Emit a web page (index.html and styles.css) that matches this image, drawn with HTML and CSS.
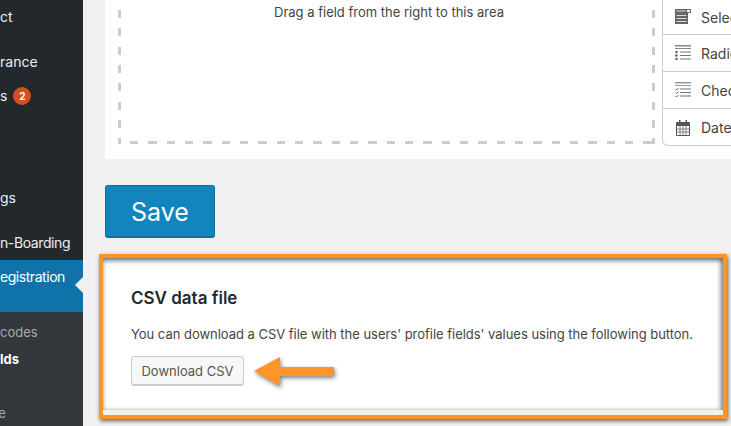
FILE: index.html
```html
<!DOCTYPE html>
<html lang="en">
<head>
    <meta charset="UTF-8">
    <meta name="viewport" content="width=device-width, initial-scale=1.0">
    <title>Profile Fields</title>
    <link rel="stylesheet" href="styles.css">
</head>
<body>
    <nav class="sidebar">
        <ul class="menu">
            <li class="menu-item">ct</li>
            <li class="menu-sep"></li>
            <li class="menu-item">rance</li>
            <li class="menu-item">s <span class="badge">2</span></li>
            <li class="menu-item"></li>
            <li class="menu-item"></li>
            <li class="menu-item">gs</li>
            <li class="menu-sep"></li>
            <li class="menu-item tight">n-Boarding</li>
            <li class="menu-item active">egistration</li>
        </ul>
        <ul class="submenu">
            <li>codes</li>
            <li class="current">lds</li>
            <li></li>
            <li class="clipped">le</li>
        </ul>
    </nav>

    <main class="content">
        <div class="panel">
            <div class="drop-area">Drag a field from the right to this area</div>
            <ul class="field-list">
                <li>
                    <svg class="field-icon" viewBox="0 0 16 16">
                        <path d="M0 0h16v4h-3v11H0z" fill="#666"/>
                        <path d="M1.500 6h10v1h-10zM1.500 9h10v1h-10zM1.500 12h10v1h-10zM1.500 1.500h9v1h-9z" fill="#ddd"/>
                        <path d="M12 1h3v2h-3z" fill="#fff"/>
                    </svg>
                    Select
                </li>
                <li>
                    <svg class="field-icon" viewBox="0 0 16 16">
                        <path d="M0 0h16v1.500H0zM0 3h16v1H0z" fill="#888"/>
                        <circle cx="1.500" cy="7" r="1.300" fill="#666"/>
                        <circle cx="1.500" cy="10.500" r="1.300" fill="#666"/>
                        <circle cx="1.500" cy="14" r="1.300" fill="#666"/>
                        <path d="M5 6.500h11v1H5zM5 10h11v1H5zM5 13.500h11v1H5z" fill="#777"/>
                    </svg>
                    Radio
                </li>
                <li>
                    <svg class="field-icon" viewBox="0 0 16 16">
                        <path d="M0 0h16v1.500H0zM0 3h16v1H0z" fill="#999"/>
                        <path d="M.5 7l1 1 2-2M.5 10.500l1 1 2-2M.5 14l1 1 2-2" fill="none" stroke="#666"/>
                        <path d="M5 6.500h11v1H5zM5 10h11v1H5zM5 13.500h11v1H5z" fill="#777"/>
                    </svg>
                    Checkbox
                </li>
                <li>
                    <svg class="field-icon" viewBox="0 0 16 16">
                        <path d="M2 2h12a1 1 0 0 1 1 1v12a1 1 0 0 1-1 1H2a1 1 0 0 1-1-1V3a1 1 0 0 1 1-1z" fill="#555"/>
                        <path d="M2 6h12v9H2z" fill="#fff"/>
                        <path d="M5 6v9M8 6v9M11 6v9M2 9h12M2 12h12" stroke="#666" stroke-width=".8"/>
                        <path d="M4 0h1.500v4H4zM10.500 0H12v4h-1.500z" fill="#555"/>
                    </svg>
                    Date
                </li>
            </ul>
        </div>

        <button class="save-button">Save</button>

        <section class="csv-frame">
            <div class="csv-box">
                <h2>CSV data file</h2>
                <p>You can download a CSV file with the users' profile fields' values using the following button.</p>
                <button class="csv-button">Download CSV</button>
            </div>
        </section>

        <svg class="arrow" width="84" height="34" viewBox="0 0 84 34">
            <path d="M0 15 26 1v10h54v9H26v10z" fill="#ff9428"/>
        </svg>
    </main>
</body>
</html>
```

FILE: styles.css
```css
* {
    box-sizing: border-box;
}

html, body {
    height: 100%;
}

body {
    display: flex;
    margin: 0;
    overflow: hidden;
    background: #f1f1f1;
    font-family: Inter, Roboto, sans-serif;
    color: #444;
}

ul {
    list-style: none;
    margin: 0;
    padding: 0;
}

.sidebar {
    flex: 0 0 83px;
    height: 426px;
    overflow: hidden;
    background: #23282d;
    color: #eee;
    font-size: 14px;
    white-space: nowrap;
}

.menu-item {
    height: 34px;
    line-height: 34px;
}

.menu-item.tight {
    letter-spacing: -0.4px;
}

.menu-sep {
    height: 11px;
}

.badge {
    display: inline-block;
    width: 18px;
    height: 18px;
    margin-left: 2px;
    border-radius: 50%;
    background: #d54e21;
    color: #fff;
    font-size: 10px;
    font-weight: 700;
    line-height: 18px;
    text-align: center;
    vertical-align: 1px;
}

.menu-item.active {
    position: relative;
    height: 52px;
    background: #0f73aa;
    color: #fff;
    letter-spacing: -0.45px;
}

.menu-item.active::after {
    content: "";
    position: absolute;
    right: 0;
    top: 17px;
    border: 8px solid transparent;
    border-left-width: 0;
    border-right-color: #f1f1f1;
}

.submenu {
    height: 114px;
    padding-top: 7px;
    background: #32373c;
    color: #a5aab0;
    font-size: 13px;
}

.submenu li {
    height: 27px;
    line-height: 27px;
}

.submenu .current {
    color: #fff;
    font-weight: 700;
}

.submenu .clipped {
    margin-left: -5px;
}

.content {
    position: relative;
    flex: 1;
    min-width: 0;
    height: 426px;
    overflow: hidden;
    padding-left: 16px;
}

.panel {
    display: flex;
    gap: 7px;
    height: 159px;
    margin-left: 6px;
    padding-left: 13px;
    background: #fff;
    white-space: nowrap;
}

.drop-area {
    flex: 0 0 537px;
    height: 144px;
    padding-top: 3px;
    padding-left: 5px;
    text-align: center;
    font-size: 13px;
    line-height: 18px;
    background:
        repeating-linear-gradient(to bottom, transparent 0 10px, #ccc 10px 18px, transparent 18px 18.33px) left top / 3px 100% no-repeat,
        repeating-linear-gradient(to bottom, transparent 0 10px, #ccc 10px 18px, transparent 18px 18.33px) right top / 3px 100% no-repeat,
        repeating-linear-gradient(to right, #ccc 0 2px, transparent 2px 12px, #ccc 12px 18.33px) left bottom / 100% 3px no-repeat;
}

.field-list {
    flex: 0 0 120px;
    height: 146px;
    border: 1px solid #ccc;
    border-top: 0;
    border-right: 0;
    border-bottom-left-radius: 6px;
    font-size: 14px;
}

.field-list li {
    display: flex;
    align-items: center;
    gap: 10px;
    height: 37px;
    padding-left: 12px;
    border-bottom: 1px solid #ccc;
}

.field-list li:first-child {
    height: 35px;
}

.field-list li:last-child {
    border-bottom: 0;
}

.field-icon {
    flex: 0 0 16px;
    width: 16px;
    height: 16px;
}

.save-button {
    display: block;
    width: 110px;
    height: 53px;
    margin: 26px 0 16px 6px;
    padding: 2px 0 0;
    border: 1px solid #0e6fa0;
    border-bottom-width: 2px;
    border-radius: 3px;
    background: #1285bd;
    color: #fff;
    font-family: inherit;
    font-size: 25px;
}

.csv-frame {
    width: 628px;
    height: 165px;
    border: 4px solid #ff9428;
    background: #f1f1f1;
    box-shadow: 1px 2px 4px rgba(0, 0, 0, 0.6);
}

.csv-box {
    height: 152px;
    padding: 28px 28px 0;
    background: #fff;
    box-shadow: inset 0 3px 4px rgba(0, 0, 0, 0.45), inset -3px 0 4px rgba(0, 0, 0, 0.3);
}

.csv-box h2 {
    margin: 0;
    color: #23282d;
    font-size: 17px;
    font-weight: 600;
    line-height: 24px;
}

.csv-box p {
    margin: 15px 0 13px;
    font-size: 13px;
    letter-spacing: -0.025px;
    line-height: 18px;
    white-space: nowrap;
}

.csv-button {
    width: 113px;
    height: 29px;
    padding: 0;
    border: 1px solid #ccc;
    border-radius: 3px;
    background: #f7f7f7;
    box-shadow: 0 1px 0 #ccc;
    color: #555;
    font-family: inherit;
    font-size: 13px;
}

.arrow {
    position: absolute;
    left: 171px;
    top: 356px;
    filter: drop-shadow(1px 2px 2px rgba(0, 0, 0, 0.5));
}
```
